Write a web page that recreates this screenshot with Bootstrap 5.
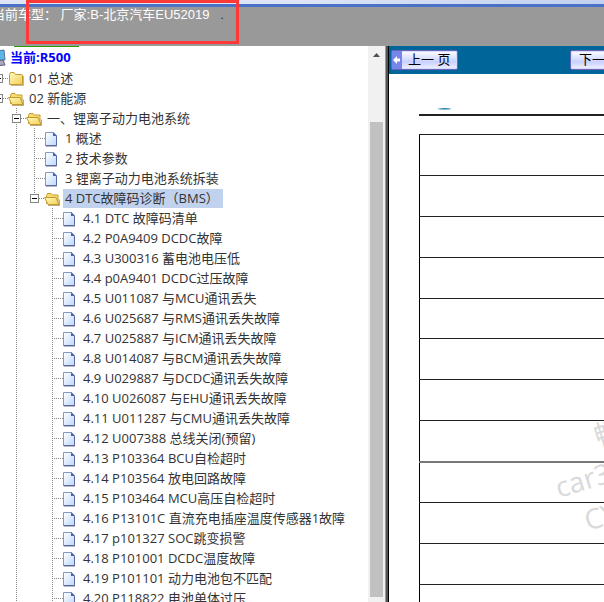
<!DOCTYPE html>
<html lang="zh-CN">
<head>
<meta charset="utf-8">
<meta name="viewport" content="width=device-width, initial-scale=1">
<title>R500</title>
<link rel="stylesheet" href="https://cdn.jsdelivr.net/npm/bootstrap@5.3.0/dist/css/bootstrap.min.css">
<style>
body { font-family: "Open Sans", "Noto Sans CJK SC", sans-serif; font-size: 13px; color: #333; }
.defs { width: 0; height: 0; }
.window-edge { height: 7px; background: linear-gradient(90deg, #dce4f5, #dce4f5 50%, #c3d0ef); border-bottom: 3px solid #4a72c8; }
.model-bar { height: 39px; background: #999; color: #fff; font-family: "Liberation Sans", "Noto Sans CJK SC", sans-serif; line-height: 16px; }
.model-text { margin-left: -8px; white-space: pre; }
.model-text span { color: #333; }
.callout { left: 26px; top: 0; width: 213px; height: 44px; border: 3px solid #ff3838; z-index: 2; }
.tree-frame { flex: 0 0 385px; }
.green-rule { height: 1px; width: 65px; margin-left: 14px; background: #390; }
.tree-root { margin-left: -12px; height: 21px; color: #00f; font-weight: 700; }
.tree-root svg { width: 20px; height: 20px; margin-right: 2px; }
.tree ul, ul.tree { list-style: none; margin: 0; padding: 0; }
ul.tree { margin-left: -2px; }
.tree ul { margin-left: 18px; }
.tree li { background: repeating-linear-gradient(#888 0 1px, transparent 1px 2px) 0 0 / 1px 100% no-repeat; }
.tree li.last { background-size: 1px 10px; }
.node { height: 20px; white-space: nowrap; }
.node a { color: #333; text-decoration: none; padding: 0 3px; line-height: 19px; }
.node a.picked { background: #c1d2ee; margin-left: 1px; padding: 0 4px 0 2px; }
.node svg { width: 16px; height: 20px; flex: none; margin-right: 2px; }
.dots { height: 1px; flex: none; background: repeating-linear-gradient(90deg, #888 0 1px, transparent 1px 2px); width: 5px; }
.leaf .dots { width: 11px; }
.leaf svg { margin-right: 1px; }
.toggle { width: 9px; height: 9px; margin: 0 0 0 -4px; border: 1px solid #848484; background: linear-gradient(#000, #000) center / 5px 1px no-repeat #fff; padding: 0; flex: none; }
.scroll-track { flex: 0 0 17px; background: #f1f1f1; padding-bottom: 5px; }
.scroll-up { height: 17px; border: 0; background: none; padding: 0; line-height: 0; }
.scroll-thumb { background: #c1c1c1; margin: 59px 2px 0; }
.splitter { flex: 0 0 4px; background: linear-gradient(90deg, #999 0 1px, #555 1px 3px, #000 3px); }
.pager { height: 28px; background: #069; padding: 3px 2px; }
.page-btn { height: 20px; width: 67px; flex: none; border: 1px solid #6666bb; border-radius: 2px; padding: 0; color: #000; background: linear-gradient(#fff, #c8d0ff 60%, #f0f2ff); font: 400 13px/16px "Liberation Sans", "Noto Sans CJK SC", sans-serif; box-shadow: 0 0 0 1px #d7dcff inset; white-space: pre; }
.page-btn svg { width: 10px; height: 18px; flex: none; }
.page-btn span { padding-left: 6px; }
.page-btn.next { margin-left: 112px; }
.page-btn.next span { padding-left: 8px; }
.sheet { padding: 33px 0 0 30px; }
.logo-arc { width: 18px; height: 4px; margin-left: 17px; }
.sheet hr { margin: 3px 0 18px; border-top: 2px solid #222; opacity: 1; }
.grid-sheet { width: 100%; border-collapse: collapse; border-left: 1px solid #000; }
.grid-sheet td { height: 41px; border-top: 1px solid #222; padding: 0; }
.grid-sheet tr.short td { height: 40px; }
.grid-sheet tr.thick td { border-top: 2px solid #777; }
.watermark { right: 0; top: 360px; width: 60px; height: 150px; }
.watermark text { font: 28px "Open Sans", "Noto Sans CJK SC", sans-serif; fill: #d9d9d9; }
</style>
<script src="https://cdn.jsdelivr.net/npm/bootstrap@5.3.0/dist/js/bootstrap.bundle.min.js"></script>
</head>
<body class="vh-100 overflow-hidden d-flex flex-column">
<svg class="defs position-absolute" aria-hidden="true">
  <defs>
    <linearGradient id="gold" x1="0" y1="0" x2="1" y2="1"><stop offset="0" stop-color="#fff9c0"/><stop offset="1" stop-color="#f2cf55"/></linearGradient>
    <linearGradient id="paper" x1="0" y1="0" x2="1" y2="1"><stop offset="0" stop-color="#fff"/><stop offset="1" stop-color="#bcd8fb"/></linearGradient>
  </defs>
  <symbol id="closed" viewBox="0 0 16 20"><path d="M1.500 16.500h13V7.500q0-1-1-1H7.500l-1.500-2h-3.500l-1 2z" fill="url(#gold)" stroke="#c49a2c"/><path d="M3 17.500h12.500V8" fill="none" stroke="#8f7030" stroke-opacity=".5"/></symbol>
  <symbol id="opened" viewBox="0 0 16 20"><path d="M2.500 15.500V7.500l1-2h3.500l1.500 1.500h5.500v8z" fill="#f6dc70" stroke="#c49a2c"/><path d="M.5 9.500h11.500l3 7H4z" fill="url(#gold)" stroke="#c49a2c"/><path d="M4 17.500h11.500v-6" fill="none" stroke="#8f7030" stroke-opacity=".6"/></symbol>
  <symbol id="page" viewBox="0 0 16 20"><path d="M.5 4.500h8l3 3v10H.5z" fill="url(#paper)" stroke="#8498c8"/><path d="M8 4v4h4z" fill="#4a66b0"/><path d="M11.500 8v9.500H.5" fill="none" stroke="#5a68a0"/><path d="M1 18.500h11" stroke="#b8b8c8"/></symbol>
</svg>

<div class="callout position-absolute"></div>
<div class="window-edge flex-shrink-0"></div>
<header class="model-bar flex-shrink-0"><div class="model-text">当前车型： 厂家:B-北京汽车EU52019   <span>.</span></div></header>

<main class="d-flex flex-fill overflow-hidden">
  <nav class="tree-frame d-flex overflow-hidden">
    <div class="flex-fill overflow-hidden">
      <div class="green-rule"></div>
      <div class="tree-root d-flex align-items-center">
        <svg viewBox="0 0 20 20"><path d="M2 4l14-2 1 10-14 1z" fill="#58b6e8" stroke="#58709c"/><path d="M8 13l7-1 2 5-10 1z" fill="#aaa7bd" stroke="#626079"/></svg>
        <span>当前:R500</span>
      </div>
      <ul class="tree">
        <li><div class="node d-flex align-items-center"><button class="toggle" aria-label="展开"></button><i class="dots"></i><svg><use href="#closed"/></svg><a href="#">01 总述</a></div></li>
        <li><div class="node d-flex align-items-center"><button class="toggle" aria-label="收起"></button><i class="dots"></i><svg><use href="#opened"/></svg><a href="#">02 新能源</a></div>
          <ul>
            <li><div class="node d-flex align-items-center"><button class="toggle" aria-label="收起"></button><i class="dots"></i><svg><use href="#opened"/></svg><a href="#">一、锂离子动力电池系统</a></div>
              <ul>
                <li><div class="node leaf d-flex align-items-center"><i class="dots"></i><svg><use href="#page"/></svg><a href="#">1 概述</a></div></li>
                <li><div class="node leaf d-flex align-items-center"><i class="dots"></i><svg><use href="#page"/></svg><a href="#">2 技术参数</a></div></li>
                <li><div class="node leaf d-flex align-items-center"><i class="dots"></i><svg><use href="#page"/></svg><a href="#">3 锂离子动力电池系统拆装</a></div></li>
                <li class="last"><div class="node d-flex align-items-center"><button class="toggle" aria-label="收起"></button><i class="dots"></i><svg><use href="#opened"/></svg><a class="picked" href="#">4 DTC故障码诊断（BMS）</a></div>
                  <ul>
                    <li><div class="node leaf d-flex align-items-center"><i class="dots"></i><svg><use href="#page"/></svg><a href="#">4.1 DTC 故障码清单</a></div></li>
                    <li><div class="node leaf d-flex align-items-center"><i class="dots"></i><svg><use href="#page"/></svg><a href="#">4.2 P0A9409 DCDC故障</a></div></li>
                    <li><div class="node leaf d-flex align-items-center"><i class="dots"></i><svg><use href="#page"/></svg><a href="#">4.3 U300316 蓄电池电压低</a></div></li>
                    <li><div class="node leaf d-flex align-items-center"><i class="dots"></i><svg><use href="#page"/></svg><a href="#">4.4 p0A9401 DCDC过压故障</a></div></li>
                    <li><div class="node leaf d-flex align-items-center"><i class="dots"></i><svg><use href="#page"/></svg><a href="#">4.5 U011087 与MCU通讯丢失</a></div></li>
                    <li><div class="node leaf d-flex align-items-center"><i class="dots"></i><svg><use href="#page"/></svg><a href="#">4.6 U025687 与RMS通讯丢失故障</a></div></li>
                    <li><div class="node leaf d-flex align-items-center"><i class="dots"></i><svg><use href="#page"/></svg><a href="#">4.7 U025887 与ICM通讯丢失故障</a></div></li>
                    <li><div class="node leaf d-flex align-items-center"><i class="dots"></i><svg><use href="#page"/></svg><a href="#">4.8 U014087 与BCM通讯丢失故障</a></div></li>
                    <li><div class="node leaf d-flex align-items-center"><i class="dots"></i><svg><use href="#page"/></svg><a href="#">4.9 U029887 与DCDC通讯丢失故障</a></div></li>
                    <li><div class="node leaf d-flex align-items-center"><i class="dots"></i><svg><use href="#page"/></svg><a href="#">4.10 U026087 与EHU通讯丢失故障</a></div></li>
                    <li><div class="node leaf d-flex align-items-center"><i class="dots"></i><svg><use href="#page"/></svg><a href="#">4.11 U011287 与CMU通讯丢失故障</a></div></li>
                    <li><div class="node leaf d-flex align-items-center"><i class="dots"></i><svg><use href="#page"/></svg><a href="#">4.12 U007388 总线关闭(预留)</a></div></li>
                    <li><div class="node leaf d-flex align-items-center"><i class="dots"></i><svg><use href="#page"/></svg><a href="#">4.13 P103364 BCU自检超时</a></div></li>
                    <li><div class="node leaf d-flex align-items-center"><i class="dots"></i><svg><use href="#page"/></svg><a href="#">4.14 P103564 放电回路故障</a></div></li>
                    <li><div class="node leaf d-flex align-items-center"><i class="dots"></i><svg><use href="#page"/></svg><a href="#">4.15 P103464 MCU高压自检超时</a></div></li>
                    <li><div class="node leaf d-flex align-items-center"><i class="dots"></i><svg><use href="#page"/></svg><a href="#">4.16 P13101C 直流充电插座温度传感器1故障</a></div></li>
                    <li><div class="node leaf d-flex align-items-center"><i class="dots"></i><svg><use href="#page"/></svg><a href="#">4.17 p101327 SOC跳变损警</a></div></li>
                    <li><div class="node leaf d-flex align-items-center"><i class="dots"></i><svg><use href="#page"/></svg><a href="#">4.18 P101001 DCDC温度故障</a></div></li>
                    <li><div class="node leaf d-flex align-items-center"><i class="dots"></i><svg><use href="#page"/></svg><a href="#">4.19 P101101 动力电池包不匹配</a></div></li>
                    <li><div class="node leaf d-flex align-items-center"><i class="dots"></i><svg><use href="#page"/></svg><a href="#">4.20 P118822 电池单体过压</a></div></li>
                  </ul>
                </li>
              </ul>
            </li>
          </ul>
        </li>
      </ul>
    </div>
    <div class="scroll-track d-flex flex-column">
      <button class="scroll-up" aria-label="向上滚动"><svg width="17" height="17"><path d="M5 11l3.500-4 3.500 4z" fill="#505050"/></svg></button>
      <div class="scroll-thumb flex-fill"></div>
    </div>
  </nav>
  <div class="splitter"></div>
  <section class="flex-fill overflow-hidden position-relative">
    <div class="pager d-flex align-items-center">
      <button class="page-btn d-flex align-items-center"><svg viewBox="0 0 10 18"><path d="M0 0h10v18H0z" fill="#7784ea"/><path d="M1 9l4-4v2.500h3v3H5V13z" fill="#fff"/></svg><span>上一 页</span></button>
      <button class="page-btn next d-flex align-items-center"><span>下一 页</span></button>
    </div>
    <div class="sheet">
      <svg class="logo-arc d-block" viewBox="0 0 18 4"><path d="M1 2q8-2 15 0-7 1-15 0z" fill="#2585a8"/></svg>
      <hr>
      <table class="grid-sheet" aria-label="故障码">
        <tbody>
          <tr><td></td></tr><tr><td></td></tr><tr><td></td></tr><tr><td></td></tr>
          <tr class="short"><td></td></tr><tr><td></td></tr><tr><td></td></tr><tr><td></td></tr>
          <tr class="thick"><td></td></tr><tr><td></td></tr><tr><td></td></tr><tr><td></td></tr>
        </tbody>
      </table>
    </div>
    <svg class="watermark position-absolute" viewBox="0 0 60 150">
      <text transform="translate(54 41) rotate(-17)">畅</text>
      <text transform="translate(15 92) rotate(-17)">car3</text>
      <text transform="translate(44 125) rotate(-17)">CY</text>
    </svg>
  </section>
</main>
</body>
</html>
